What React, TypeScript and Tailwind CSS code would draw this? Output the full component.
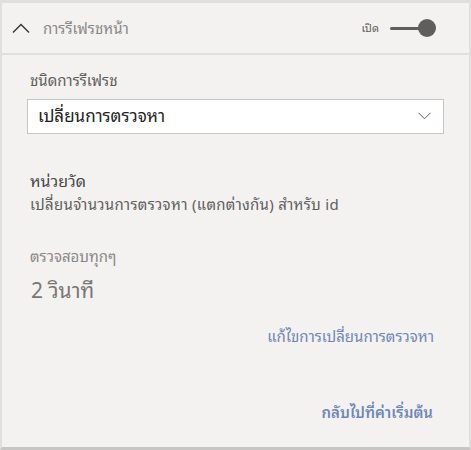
import { useState } from "react";

const font = {
  fontFamily:
    '"Segoe UI", "Noto Sans", "Noto Sans Thai Looped", Loma, Garuda, "Noto Sans Thai", Tahoma, "DejaVu Sans", sans-serif',
};

function ChevronUp() {
  return (
    <svg width="18" height="10" viewBox="0 0 18 10" fill="none">
      <path d="M1 9.5 L9 1.5 L17 9.5" stroke="#323130" strokeWidth="1.3" />
    </svg>
  );
}

function ChevronDown() {
  return (
    <svg width="13" height="8" viewBox="0 0 13 8" fill="none">
      <path d="M0.5 0.8 L6.5 6.8 L12.5 0.8" stroke="#605e5c" strokeWidth="1" />
    </svg>
  );
}

function Toggle({ on }: { on: boolean }) {
  return (
    <div className="relative flex h-[18px] w-[46px] items-center">
      <div className="h-[3px] w-[40px] rounded-full bg-[#605e5c]" />
      <div className={`absolute top-0 size-[18px] rounded-full bg-[#605e5c] ${on ? "right-0" : "left-0"}`} />
    </div>
  );
}

export default function App() {
  const [on] = useState(true);

  return (
    <div
      className="flex h-[450px] w-[471px] flex-col border-x-2 border-t-[3px] border-b-[3px] border-x-[#e1dfdd] border-t-[#e1dfdd] border-b-[#c8c6c4] bg-[#f3f2f1]"
      style={font}
    >
      <div className="flex h-[52px] items-center border-b-2 border-[#e1dfdd] pl-[10px] pr-[33px]">
        <ChevronUp />
        <span className="ml-[13px] text-[15px] text-[#8a8886]">การรีเฟรชหน้า</span>
        <div className="ml-auto flex items-center gap-[11px]">
          <span className="text-[11px] text-[#605e5c]">เปิด</span>
          <Toggle on={on} />
        </div>
      </div>

      <div className="flex flex-1 flex-col px-[25px]">
        <p className="mt-[14px] pl-[3px] text-[15px] text-[#605e5c]">ชนิดการรีเฟรช</p>
        <div className="mt-[7px] flex h-[35px] items-center justify-between border border-[#c8c6c4] bg-white pl-[10px] pr-[12px]">
          <span className="text-[17px] text-[#252423]">เปลี่ยนการตรวจหา</span>
          <ChevronDown />
        </div>

        <p className="mt-[35px] pl-[3px] text-[16px] text-[#484644]">หน่วยวัด</p>
        <p className="mt-0 pl-[3px] text-[15px] tracking-[0.3px] text-[#605e5c]">
          เปลี่ยนจำนวนการตรวจหา (แตกต่างกัน) สำหรับ id
        </p>

        <p className="mt-[30px] pl-[3px] text-[15px] text-[#8a8886]">ตรวจสอบทุกๆ</p>
        <p className="mt-[7px] pl-[4px] text-[21px] text-[#797775]">2 วินาที</p>

        <div className="mt-[19px] flex justify-end pr-[10px]">
          <a className="text-[15px] text-[#6f86b7]">แก้ไขการเปลี่ยนการตรวจหา</a>
        </div>

        <div className="mt-[53px] flex justify-end pr-[11px]">
          <a className="text-[15px] font-semibold text-[#6f86b7]">กลับไปที่ค่าเริ่มต้น</a>
        </div>
      </div>
    </div>
  );
}
